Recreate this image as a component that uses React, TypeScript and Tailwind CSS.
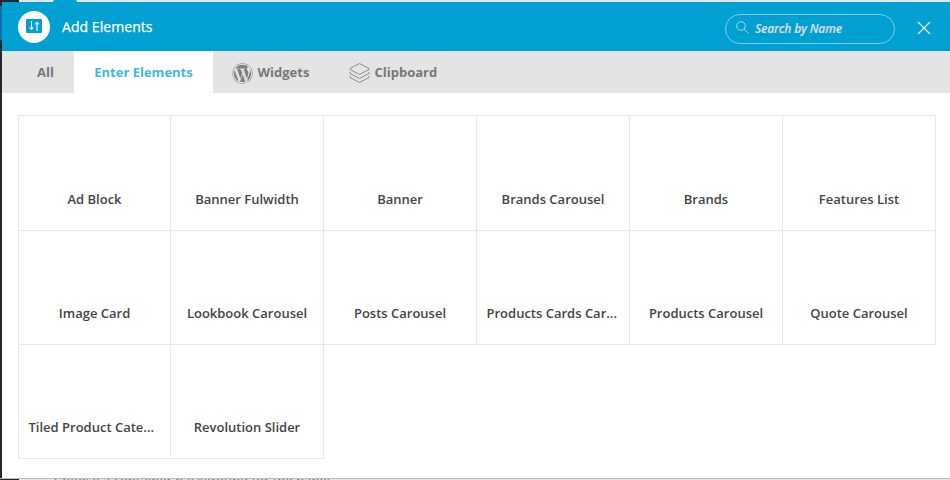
import React from "react";
import { FaWordpress } from "react-icons/fa";

const rows = [
  ["Ad Block", "Banner Fulwidth", "Banner", "Brands Carousel", "Brands", "Features List"],
  ["Image Card", "Lookbook Carousel", "Posts Carousel", "Products Cards Car...", "Products Carousel", "Quote Carousel"],
  ["Tiled Product Cate...", "Revolution Slider"],
];

function LayersIcon() {
  return (
    <svg className="mt-px" width="21" height="22" viewBox="0 0 21 22" fill="none" stroke="#8c8c8c" strokeWidth="1">
      <path d="M10.500 1.500 20 6.500V7.500L10.500 12.500 1 7.500V6.500Z" />
      <path d="M1 10v1.500l9.500 5 9.500-5V10" />
      <path d="M1 14v1.500l9.500 5 9.500-5V14" />
    </svg>
  );
}

function Header() {
  return (
    <header className="flex h-[49px] shrink-0 items-center bg-[#00a0d2]">
      <div className="ml-4 flex size-8 items-center justify-center rounded-full bg-white">
        <svg className="-mt-px" width="16" height="16" viewBox="0 0 16 16">
          <rect y="1" width="16" height="14" rx="1" fill="#00a0d2" />
          <path d="M5.500 3v8M11 5v8" stroke="#fff" strokeWidth="1.1" />
          <path d="M3 9.500h5L5.500 12.200ZM8.500 6.200h5L11 3.500Z" fill="#fff" />
        </svg>
      </div>
      <h1 className="ml-3 text-[14px] leading-5 tracking-[0.06px] text-white [-webkit-text-stroke:0.25px_#fff]">Add Elements</h1>
      <div className="ml-auto mt-1 flex h-[30px] w-[170px] items-center rounded-full border border-[#80d0e9] pl-[10px]">
        <svg className="-mt-0.5" width="13" height="13" viewBox="0 0 13 13" fill="none" stroke="#a5dcef">
          <circle cx="5" cy="5" r="4.300" />
          <path d="m8 8 4.500 4.500" />
        </svg>
        <span className="ml-[6px] text-[12px] font-semibold italic leading-4 tracking-[-0.15px] text-[#dcdcdc] [-webkit-text-stroke:0.2px_#dcdcdc]">Search by Name</span>
      </div>
      <svg className="ml-[22px] mr-[19px] mt-[3px]" width="14" height="14" viewBox="0 0 14 14" stroke="#fff" strokeWidth="1.100">
        <path d="m1 1 12 12M13 1 1 13" />
      </svg>
    </header>
  );
}

function Tabs() {
  return (
    <nav className="flex h-[42px] shrink-0 bg-[#e4e4e4] text-[13px] font-bold text-[#777]">
      <div className="flex w-[72px] items-center pl-[35px] pt-px">All</div>
      <div className="flex w-[139px] items-center justify-center bg-white pt-px text-[#42b8dd]">Enter Elements</div>
      <div className="flex w-[136px] items-center pl-[19px] pt-px">
        <FaWordpress className="mt-px text-[21px] text-[#808080]" />
        <span className="ml-[4.5px]">Widgets</span>
      </div>
      <div className="flex items-center pt-px">
        <LayersIcon />
        <span className="ml-[4.5px]">Clipboard</span>
      </div>
    </nav>
  );
}

export default function App() {
  return (
    <div className="flex h-[480px] w-[950px] flex-col overflow-hidden bg-[#e5e5e5] font-['Open_Sans',sans-serif]">
      <div className="flex h-[2px] shrink-0">
        <div className="w-[19px] bg-[#23282d]" />
        <div className="ml-[34px] w-6 rounded-t bg-[#00a0d2]" />
      </div>
      <div className="flex h-[476px] shrink-0">
        <div className="w-[2px] bg-[#23282d]">
          <div className="mt-1 h-[34px] bg-[#0073aa]" />
        </div>
        <main className="flex w-[948px] flex-col bg-white">
          <Header />
          <Tabs />
          <div className="ml-4 mt-[22px] w-[918px]">
            {rows.map((row, r) => (
              <div key={row[0]} className={r === 0 ? "flex h-[116px]" : "-mt-px flex h-[115px]"}>
                {row.map((name, c) => (
                  <div
                    key={name}
                    className={`border border-[#e8e8e8] px-[9.5px] text-[13px] font-semibold leading-[18px] text-[#444] ${name.endsWith("...") ? "text-left" : "text-center"} ${c === 0 ? "w-[153px]" : "-ml-px w-[154px]"} ${r === 0 ? "pt-[74px]" : "pt-[73px]"}`}
                  >
                    <div className="whitespace-nowrap">{name}</div>
                  </div>
                ))}
              </div>
            ))}
          </div>
        </main>
      </div>
      <div className="flex h-[2px] shrink-0 overflow-hidden border-t border-[#bbb]">
        <div className="w-[19px] bg-[#23282d]" />
        <span className="ml-[35px] whitespace-nowrap text-[13px] leading-[2px] tracking-[0.05px] text-[#777]">Choose a container background for the panel</span>
      </div>
    </div>
  );
}
